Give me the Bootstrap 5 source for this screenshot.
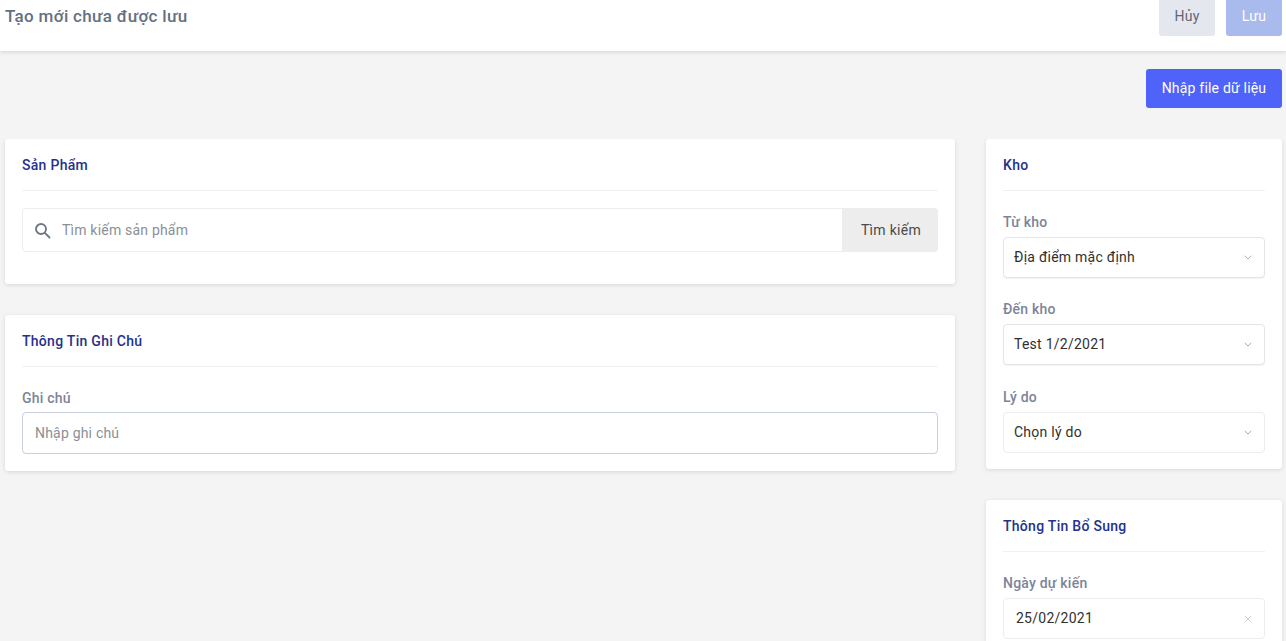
<!doctype html>
<html lang="vi">
<head>
<meta charset="utf-8">
<link href="https://cdn.jsdelivr.net/npm/bootstrap@5.3.0/dist/css/bootstrap.min.css" rel="stylesheet">
<style>
html,body{height:641px;overflow:hidden}
body{background:#f4f4f4;font-family:Roboto,"Liberation Sans",sans-serif;color:#212b36;font-size:14px;letter-spacing:.22px}
.topbar{height:51px;background:#fff;box-shadow:0 1px 4px rgba(0,0,0,.14);padding:0 4px 19px 5px;position:relative}
.topbar-inner{height:32px}
.page-title{font-size:17px;font-weight:500;color:#667080;margin:0;line-height:32px;letter-spacing:.33px}
.btn-top{width:56px;height:40px;font-size:14px;padding:0;border:0;border-radius:3px;flex:none;letter-spacing:.3px}
.btn-cancel{background:#e4e7ed;color:#5d6675}
.btn-save,.btn-save:disabled{background:#a9bbec;color:#fff;opacity:1}
.btn-gap{gap:11px}
.actionbar{padding:18px 4px 31px 5px}
.btn-import{width:136px;height:39px;background:#4f63fb;color:#fff;font-size:14px;padding:0;border:0;border-radius:3px;letter-spacing:.2px}
.main-cols{padding:0 4px 0 5px;gap:31px;height:502px;overflow:hidden}
.col-left{width:950px;flex:none}
.col-right{width:296px;flex:none}
.panel{display:flow-root;background:#fff;border:0;border-radius:3px;box-shadow:0 1px 4px rgba(0,0,0,.12);padding:0 17px;margin-bottom:31px}
.panel-title{height:52px;margin:0;font-size:14px;font-weight:500;color:#25318c;line-height:52px;border-bottom:1px solid #eef0f2;letter-spacing:.28px}
.search-row{margin-top:17px;height:44px;margin-bottom:32px;border:1px solid #ebedf0;border-radius:4px}
.search-ico{width:39px;flex:none;padding-left:11px}
.search-input{border:0;outline:0;flex:1;min-width:0;font-size:14px;padding:0;color:#212b36;letter-spacing:.2px}
.search-input::placeholder,.note-input::placeholder{color:#8a8f96;opacity:1}
.btn-find{width:96px;background:#ededed;color:#4a4a4a;font-size:14px;border:0;border-radius:0 4px 4px 0;padding:0 0 0 2px;margin:-1px -1px -1px 0;letter-spacing:.3px}
.field-label{display:block;font-size:14px;font-weight:500;color:#7d8499;line-height:20px;margin:0 0 5px}
.field-tight{margin-bottom:4px}
.note-input{display:block;width:100%;height:42px;border:1px solid #c9cedf;border-radius:4px;padding:0 12px;font-size:14px;outline:0;margin-bottom:17px;letter-spacing:.2px}
.pick{height:41px;border:1px solid #ebedf0;border-radius:4px;padding:0 12px 0 10px;color:#303030;font-size:14px;margin-bottom:21px;background:#fff;letter-spacing:.25px}
.pick-strong{border-color:#e3e5e9;box-shadow:0 1px 1px rgba(0,0,0,.05)}
.pick-date{padding-left:12px}
.pick-wide{margin-bottom:22px}
.sec-first{padding-top:21px}
.last-pick{margin-bottom:16px}
</style>
</head>
<body>
<header class="topbar">
  <div class="topbar-inner d-flex align-items-center justify-content-between">
    <h1 class="page-title">Tạo mới chưa được lưu</h1>
    <div class="d-flex align-items-center btn-gap">
      <button type="button" class="btn btn-top btn-cancel">Hủy</button>
      <button type="button" class="btn btn-top btn-save" disabled>Lưu</button>
    </div>
  </div>
</header>
<div class="actionbar d-flex justify-content-end">
  <button type="button" class="btn btn-import">Nhập file dữ liệu</button>
</div>
<div class="main-cols d-flex align-items-start">
  <div class="col-left">
    <section class="panel">
      <h2 class="panel-title">Sản Phẩm</h2>
      <div class="search-row d-flex align-items-stretch">
        <div class="search-ico d-flex align-items-center">
          <svg width="17" height="17" viewBox="0 0 17 17" fill="none" stroke="#6f7785" stroke-width="1.9" stroke-linecap="round" aria-hidden="true"><circle cx="7" cy="7" r="5"/><path d="M10.8 10.8 15.5 15.5"/></svg>
        </div>
        <input class="search-input" type="text" placeholder="Tìm kiếm sản phẩm">
        <button type="button" class="btn-find">Tìm kiếm</button>
      </div>
    </section>
    <section class="panel">
      <h2 class="panel-title">Thông Tin Ghi Chú</h2>
      <div class="sec-first">
        <label class="field-label field-tight" for="note">Ghi chú</label>
        <input id="note" class="note-input" type="text" placeholder="Nhập ghi chú">
      </div>
    </section>
  </div>
  <div class="col-right">
    <section class="panel">
      <h2 class="panel-title">Kho</h2>
      <div class="sec-first">
        <span class="field-label">Từ kho</span>
        <div class="pick pick-strong d-flex align-items-center justify-content-between"><span>Địa điểm mặc định</span>
          <svg width="8" height="5" viewBox="0 0 8 5" fill="none" stroke="#a8abb0" aria-hidden="true"><path d="M.7.8 4 4 7.3.8"/></svg></div>
        <span class="field-label">Đến kho</span>
        <div class="pick pick-wide pick-strong d-flex align-items-center justify-content-between"><span>Test 1/2/2021</span>
          <svg width="8" height="5" viewBox="0 0 8 5" fill="none" stroke="#a8abb0" aria-hidden="true"><path d="M.7.8 4 4 7.3.8"/></svg></div>
        <span class="field-label">Lý do</span>
        <div class="pick last-pick d-flex align-items-center justify-content-between"><span>Chọn lý do</span>
          <svg width="8" height="5" viewBox="0 0 8 5" fill="none" stroke="#a8abb0" aria-hidden="true"><path d="M.7.8 4 4 7.3.8"/></svg></div>
      </div>
    </section>
    <section class="panel">
      <h2 class="panel-title">Thông Tin Bổ Sung</h2>
      <div class="sec-first">
        <span class="field-label">Ngày dự kiến</span>
        <div class="pick pick-date d-flex align-items-center justify-content-between"><span>25/02/2021</span>
          <svg width="8" height="8" viewBox="0 0 8 8" fill="none" stroke="#d0d2d6" aria-hidden="true"><path d="M.8.8 7.2 7.2M7.2.8.8 7.2"/></svg></div>
      </div>
    </section>
  </div>
</div>
</body>
</html>
